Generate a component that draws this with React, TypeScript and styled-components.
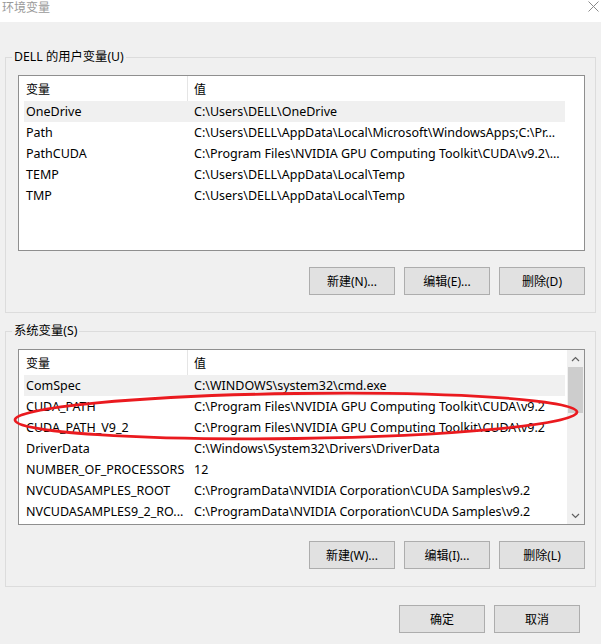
import styled, { createGlobalStyle } from "styled-components";

type Variable = { name: string; value: string; selected?: boolean };

const userVars: Variable[] = [
    { name: "OneDrive", value: "C:\\Users\\DELL\\OneDrive", selected: true },
    { name: "Path", value: "C:\\Users\\DELL\\AppData\\Local\\Microsoft\\WindowsApps;C:\\Pr..." },
    { name: "PathCUDA", value: "C:\\Program Files\\NVIDIA GPU Computing Toolkit\\CUDA\\v9.2\\..." },
    { name: "TEMP", value: "C:\\Users\\DELL\\AppData\\Local\\Temp" },
    { name: "TMP", value: "C:\\Users\\DELL\\AppData\\Local\\Temp" },
];

const systemVars: Variable[] = [
    { name: "ComSpec", value: "C:\\WINDOWS\\system32\\cmd.exe", selected: true },
    { name: "CUDA_PATH", value: "C:\\Program Files\\NVIDIA GPU Computing Toolkit\\CUDA\\v9.2" },
    { name: "CUDA_PATH_V9_2", value: "C:\\Program Files\\NVIDIA GPU Computing Toolkit\\CUDA\\v9.2" },
    { name: "DriverData", value: "C:\\Windows\\System32\\Drivers\\DriverData" },
    { name: "NUMBER_OF_PROCESSORS", value: "12" },
    { name: "NVCUDASAMPLES_ROOT", value: "C:\\ProgramData\\NVIDIA Corporation\\CUDA Samples\\v9.2" },
    { name: "NVCUDASAMPLES9_2_RO...", value: "C:\\ProgramData\\NVIDIA Corporation\\CUDA Samples\\v9.2" },
];

const Chevron = ({ up }: { up?: boolean }) => (
    <svg width="9" height="6" viewBox="0 0 9 6">
        <path
            d={up ? "M1 5 L4.5 1.5 L8 5" : "M1 1 L4.5 4.5 L8 1"}
            fill="none"
            stroke="#606060"
            strokeWidth="1.2"
        />
    </svg>
);

const VarList = ({ rows, scroll }: { rows: Variable[]; scroll?: boolean }) => {
    return (
        <ListBox>
            <Table>
                <HeaderRow>
                    <HeadCell $first>变量</HeadCell>
                    <HeadCell>值</HeadCell>
                </HeaderRow>
                {
                    rows.map((row, i) => (
                        <Row key={i} $selected={row.selected}>
                            <NameCell>{row.name}</NameCell>
                            <ValueCell>{row.value}</ValueCell>
                        </Row>
                    ))
                }
            </Table>
            {scroll && (
                <ScrollTrack>
                    <ArrowButton><Chevron up /></ArrowButton>
                    <Thumb />
                    <TrackSpace />
                    <ArrowButton><Chevron /></ArrowButton>
                </ScrollTrack>
            )}
        </ListBox>
    );
};

const App = () => {
    return (
        <Window>
            <GlobalStyle />
            <TitleBar>
                <Title>环境变量</Title>
                <svg width="11" height="11" viewBox="0 0 11 11" style={{ margin: "1px 2px 0 0" }}>
                    <path d="M0.5 0.5 L10.5 10.5 M10.5 0.5 L0.5 10.5" stroke="#8a8a8a" strokeWidth="1" />
                </svg>
            </TitleBar>

            <Content>
                <Group $top={35}>
                    <Legend>DELL 的用户变量(U)</Legend>
                    <VarList rows={userVars} />
                    <ButtonRow>
                        <Button>新建(N)...</Button>
                        <Button>编辑(E)...</Button>
                        <Button>删除(D)</Button>
                    </ButtonRow>
                </Group>

                <Group $top={18}>
                    <Legend>系统变量(S)</Legend>
                    <VarList rows={systemVars} scroll />
                    <ButtonRow>
                        <Button>新建(W)...</Button>
                        <Button>编辑(I)...</Button>
                        <Button>删除(L)</Button>
                    </ButtonRow>
                </Group>

                <DialogButtons>
                    <Button>确定</Button>
                    <Button>取消</Button>
                </DialogButtons>
            </Content>

            <Mark width="580" height="64" viewBox="0 0 580 64">
                <ellipse
                    cx="284"
                    cy="31"
                    rx="281"
                    ry="22.5"
                    fill="none"
                    stroke="#ea1a1f"
                    strokeWidth="2.8"
                    transform="rotate(-0.8 284 31)"
                />
            </Mark>
        </Window>
    );
};

const GlobalStyle = createGlobalStyle`
    html, body {
        margin: 0;
        padding: 0;
        background: #f0f0f0;
    }

    body {
        font-family: "Noto Sans", "Noto Sans CJK SC", sans-serif;
        font-size: 12px;
        color: #000;
    }
`;

const Window = styled.div`
    position: relative;
    width: 601px;
    height: 644px;
    overflow: hidden;
    background: #f0f0f0;
`;

const TitleBar = styled.div`
    height: 22px;
    background: #fff;
    display: flex;
    justify-content: space-between;
    align-items: flex-start;
`;

const Title = styled.div`
    color: #9a9a9a;
    font-family: "Noto Sans CJK SC", sans-serif;
    font-size: 12px;
    line-height: 14px;
    padding-left: 2px;
`;

const Content = styled.div`
    display: flex;
    flex-direction: column;
    padding: 0 5px;
`;

const Group = styled.section<{ $top: number }>`
    display: flex;
    flex-direction: column;
    margin-top: ${({ $top }) => $top}px;
    border: 1px solid #dcdcdc;
    padding: 0 10px 17px 12px;
`;

const Legend = styled.div`
    align-self: flex-start;
    margin: -9px 0 0 -6px;
    padding: 0 2px;
    line-height: 16px;
    background: #f0f0f0;
    font-size: 12.3px;
`;

const ListBox = styled.div`
    display: flex;
    height: 176px;
    margin-top: 10px;
    border: 1px solid #8f8f8f;
    background: #fff;
    box-sizing: border-box;
    overflow: hidden;
`;

const Table = styled.div`
    width: 541px;
    margin-left: 5px;
    margin-right: 2px;
    flex-shrink: 0;
`;

const HeaderRow = styled.div`
    display: flex;
    height: 25px;
`;

const HeadCell = styled.div<{ $first?: boolean }>`
    box-sizing: border-box;
    width: ${({ $first }) => ($first ? "164px" : "auto")};
    flex: ${({ $first }) => ($first ? "none" : "1")};
    padding-left: ${({ $first }) => ($first ? "2px" : "6px")};
    border-right: ${({ $first }) => ($first ? "1px solid #e5e5e5" : "none")};
    line-height: 25px;
    font-family: "Noto Sans CJK SC", sans-serif;
`;

const Row = styled.div<{ $selected?: boolean }>`
    display: flex;
    height: 21px;
    line-height: 22px;
    font-size: 12.5px;
    background: ${({ $selected }) => ($selected ? "#f0f0f0" : "transparent")};
    white-space: nowrap;
`;

const NameCell = styled.div`
    width: 164px;
    flex: none;
    padding-left: 2px;
    box-sizing: border-box;
    overflow: hidden;
`;

const ValueCell = styled.div`
    flex: 1;
    padding-left: 6px;
    overflow: hidden;
`;

const ScrollTrack = styled.div`
    width: 17px;
    display: flex;
    flex-direction: column;
    background: #f0f0f0;
`;

const ArrowButton = styled.div`
    height: 17px;
    display: flex;
    align-items: center;
    justify-content: center;
`;

const Thumb = styled.div`
    height: 46px;
    margin: 0 1px;
    background: #cdcdcd;
`;

const TrackSpace = styled.div`
    flex: 1;
`;

const ButtonRow = styled.div`
    display: flex;
    justify-content: flex-end;
    gap: 9px;
    margin-top: 16px;
`;

const Button = styled.button`
    width: 86px;
    height: 28px;
    padding: 0;
    background: #e1e1e1;
    border: 1px solid #adadad;
    font-family: "Noto Sans", "Noto Sans CJK SC", sans-serif;
    font-size: 12px;
    color: #000;
`;

const DialogButtons = styled.div`
    display: flex;
    justify-content: flex-end;
    gap: 9px;
    margin-top: 18px;
    padding-right: 16px;
`;

const Mark = styled.svg`
    position: absolute;
    left: 12px;
    top: 385px;
    pointer-events: none;
`;

export default App;
